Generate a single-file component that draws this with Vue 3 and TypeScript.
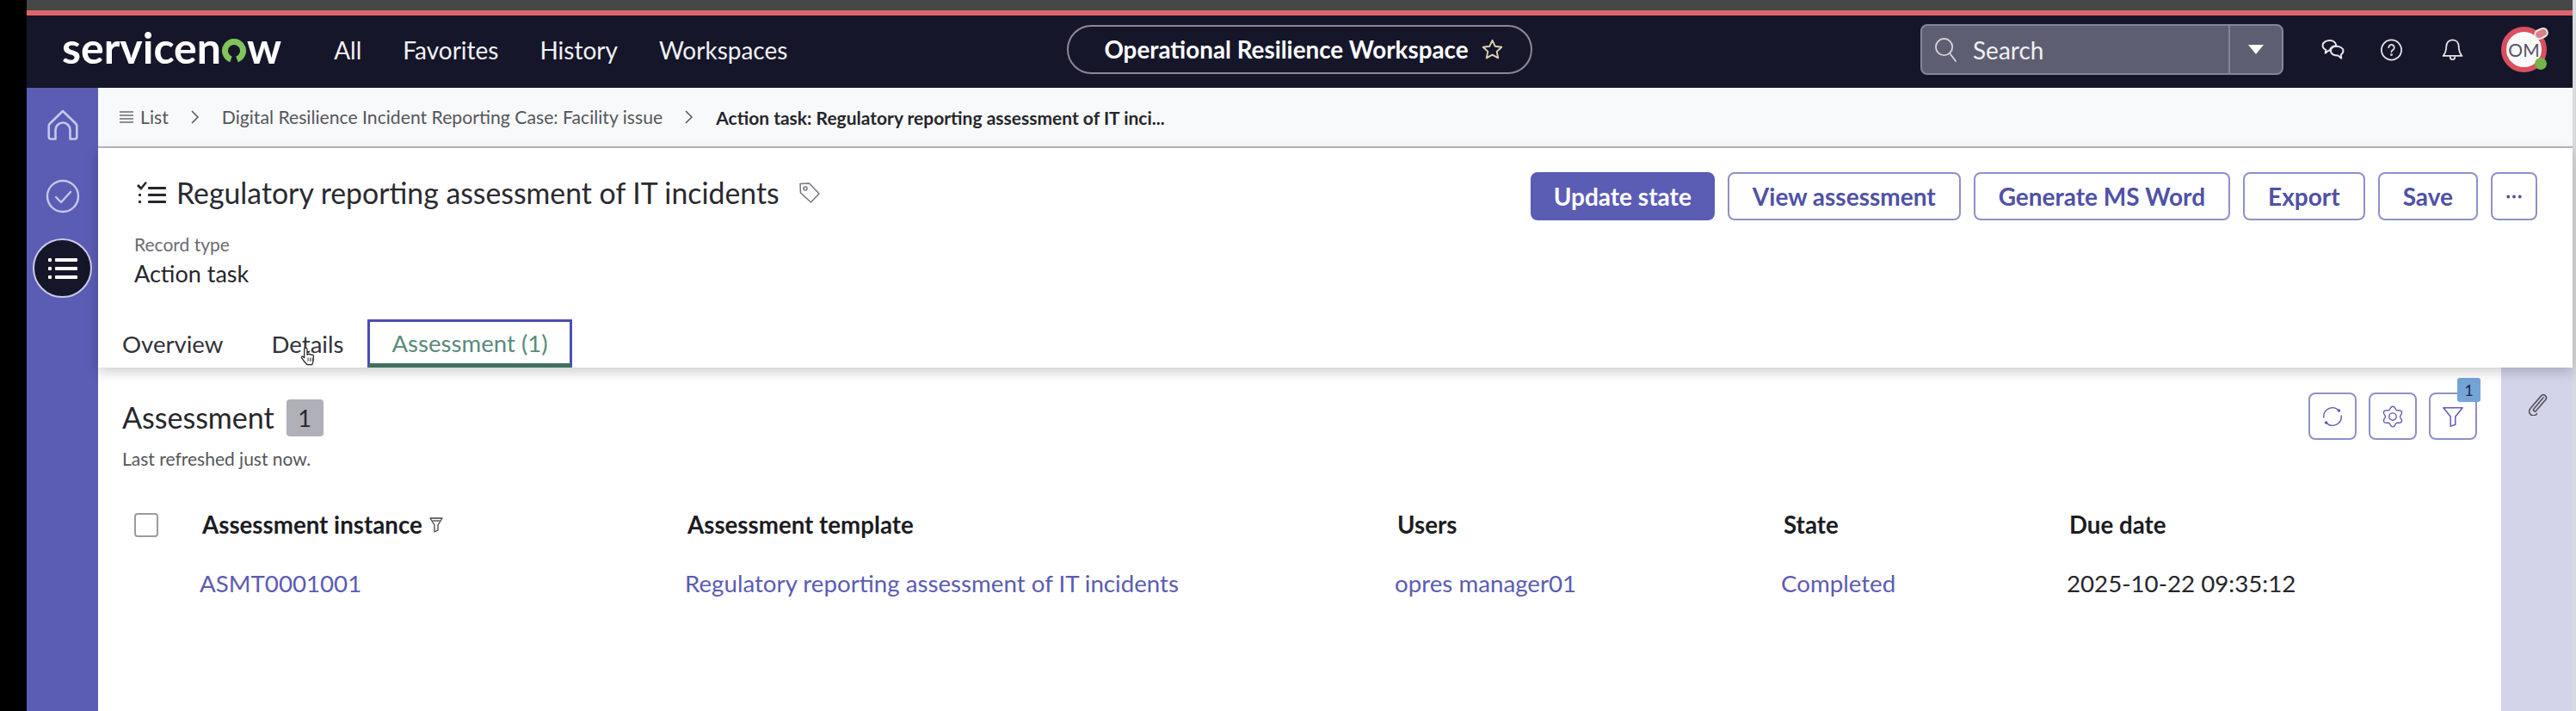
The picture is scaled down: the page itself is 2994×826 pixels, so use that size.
<template>
  <div class="screen">
    <div class="edge-left"></div>

    <div class="window">
      <div class="chrome"></div>
      <div class="accent-line"></div>

      <header class="topnav">
        <div class="nav-left">
          <div class="logo">
            <span>servicen</span>
            <svg class="logo-o" viewBox="0 0 30 30" fill="none" stroke="#81c45c" stroke-width="7">
              <path d="M11.500 24.900A10.500 10.500 0 1 1 18.500 24.900" />
            </svg>
            <span>w</span>
          </div>
          <a v-for="item in navItems" :key="item" class="nav-link">{{ item }}</a>
        </div>

        <div class="workspace-pill">
          <span>Operational Resilience Workspace</span>
          <svg class="star" viewBox="0 0 24 24" fill="none" stroke="#ddd3ac" stroke-width="1.7" stroke-linejoin="round">
            <path d="M12 2.500l2.900 6.200 6.700.8-5 4.600 1.400 6.700-6-3.400-6 3.400 1.400-6.700-5-4.600 6.700-.8z" />
          </svg>
        </div>

        <div class="nav-right">
          <div class="search">
            <div class="search-field">
              <svg class="search-icon" viewBox="0 0 28 30" fill="none" stroke="#d8d8de" stroke-width="1.8" stroke-linecap="round">
                <circle cx="12" cy="12" r="10" />
                <path d="M19 20l7 9" />
              </svg>
              <span>Search</span>
            </div>
            <div class="search-caret"><span class="caret"></span></div>
          </div>

          <svg class="nav-icon chat" viewBox="0 0 26 24" fill="none" stroke="#e6e6ea" stroke-width="1.9" stroke-linejoin="round">
            <path d="M9.500 1.500c4 0 7 2.300 7 5.300 0 .4 0 .7-.1 1-3.400-.4-6.700 1.700-6.800 5H8l-3.500 2.700.6-3.600C2.800 11 1.500 9 1.500 6.800c0-3 3.500-5.300 8-5.300z" />
            <path d="M17 8c4 0 7.500 2 7.500 5 0 1.900-1 3.400-2.600 4.300l.5 4-3.800-3c-4 .2-8-1.500-8-5C10.600 9.800 13.500 8 17 8z" />
          </svg>
          <svg class="nav-icon help" viewBox="0 0 28 28" fill="none" stroke="#e6e6ea" stroke-width="1.9" stroke-linecap="round">
            <circle cx="14" cy="14" r="12.500" />
            <path d="M10.500 11a3.500 3.500 0 1 1 5.300 3c-1.200.7-1.800 1.300-1.800 2.500" />
            <circle cx="14" cy="20" r=".6" />
          </svg>
          <svg class="nav-icon bell" viewBox="0 0 28 28" fill="none" stroke="#e6e6ea" stroke-width="1.9" stroke-linejoin="round">
            <path d="M14 1.500c4.800 0 7.800 3.500 7.800 8.500 0 5 1 8 4 11.500H2.200c3-3.500 4-6.500 4-11.500 0-5 3-8.500 7.800-8.500z" />
            <path d="M11 22c0 2.500 1.400 4 3 4s3-1.500 3-4" />
          </svg>

          <div class="avatar">
            <span class="avatar-initials">OM</span>
            <span class="avatar-tag"></span>
            <span class="avatar-status"></span>
          </div>
        </div>
      </header>

      <div class="body">
        <aside class="sidebar">
          <div class="side-item">
            <svg class="home" viewBox="0 0 36 36" fill="none" stroke="#c6c8ea" stroke-width="2.600" stroke-linejoin="round" stroke-linecap="round">
              <path d="M18 2L3 16.500c-.8.800-1.300 1.800-1.300 3V32c0 1.500 1 2.500 2.500 2.500h5.300V24a8.500 8.500 0 0 1 17 0v10.500h5.300c1.500 0 2.500-1 2.500-2.500V19.500c0-1.200-.5-2.200-1.300-3z" />
            </svg>
          </div>
          <div class="side-item">
            <svg class="check" viewBox="0 0 40 40" fill="none" stroke="#c6c8ea" stroke-width="2.400" stroke-linecap="round" stroke-linejoin="round">
              <circle cx="20" cy="20" r="18" />
              <path d="M12 21l6 6 11-12" />
            </svg>
          </div>
          <div class="side-item">
            <div class="side-active">
              <svg class="side-list" viewBox="0 0 34 28" fill="#fff">
                <rect x="0" y="2" width="4" height="4" rx="1" />
                <rect x="0" y="12" width="4" height="4" rx="1" />
                <rect x="0" y="22" width="4" height="4" rx="1" />
                <rect x="8" y="2" width="26" height="4" rx="1" />
                <rect x="8" y="12" width="26" height="4" rx="1" />
                <rect x="8" y="22" width="26" height="4" rx="1" />
              </svg>
            </div>
          </div>
        </aside>

        <main class="content">
          <nav class="breadcrumb">
            <svg class="crumb-icon" viewBox="0 0 16 14" fill="#8d8d92">
              <rect x="0" y="0" width="16" height="2" />
              <rect x="0" y="4" width="16" height="2" />
              <rect x="0" y="8" width="16" height="2" />
              <rect x="0" y="12" width="16" height="2" />
            </svg>
            <span class="crumb">List</span>
            <svg class="crumb-sep" viewBox="0 0 10 16" fill="none" stroke="#55555c" stroke-width="1.500"><path d="M1 1l7 7-7 7" /></svg>
            <span class="crumb">Digital Resilience Incident Reporting Case: Facility issue</span>
            <svg class="crumb-sep" viewBox="0 0 10 16" fill="none" stroke="#55555c" stroke-width="1.500"><path d="M1 1l7 7-7 7" /></svg>
            <span class="crumb crumb-current">Action task: Regulatory reporting assessment of IT inci...</span>
          </nav>

          <section class="record-header">
            <div class="title-row">
              <div class="title-left">
                <svg class="title-icon" viewBox="0 0 34 26" fill="#26262c">
                  <path d="M0 5l2-2 3 3 5-6 1.800 1.500L5 10z" />
                  <rect x="13" y="6" width="21" height="3" rx=".8" />
                  <rect x="13" y="14" width="21" height="3" rx=".8" />
                  <rect x="13" y="22" width="21" height="3" rx=".8" />
                  <rect x="2" y="14" width="3" height="3" rx=".8" />
                  <rect x="2" y="22" width="3" height="3" rx=".8" />
                </svg>
                <h1 class="title">Regulatory reporting assessment of IT incidents</h1>
                <svg class="tag-icon" viewBox="0 0 26 26" fill="none" stroke="#77777e" stroke-width="1.500" stroke-linejoin="round">
                  <path d="M2 2.500l10.500-.5 11.500 12-9.500 10L2.500 13z" />
                  <circle cx="8" cy="8" r="2" />
                </svg>
              </div>
              <div class="actions">
                <button class="btn btn-primary">Update state</button>
                <button v-for="label in actionLabels" :key="label" class="btn">{{ label }}</button>
                <button class="btn btn-more">
                  <svg viewBox="0 0 16 4" fill="#4f51a6"><circle cx="2" cy="2" r="1.700" /><circle cx="8" cy="2" r="1.700" /><circle cx="14" cy="2" r="1.700" /></svg>
                </button>
              </div>
            </div>

            <div class="record-type">
              <div class="record-label">Record type</div>
              <div class="record-value">Action task</div>
            </div>

            <div class="tabs">
              <div class="tab">Overview</div>
              <div class="tab tab-hover">
                Details
                <svg class="hand" viewBox="0 0 20 22">
                  <path d="M6 1.500c1 0 1.600.7 1.600 1.700v6l1-.3c.3-.8 1.700-.8 2 .2.500-.7 1.900-.5 2.100.5.600-.5 1.900-.2 2 1 .2 3 .2 6-1.500 9.500H7.500C5.500 18 3 15 1.500 12.500c-.5-1 .8-2 1.700-1.200l1.300 1.300V3.200c0-1 .5-1.700 1.500-1.700z" fill="#fff" stroke="#26262c" stroke-width="1.200" stroke-linejoin="round" />
                  <path d="M8.600 12.500v4M11 12.500v4M13.300 12.500v4" stroke="#26262c" stroke-width=".9" fill="none" />
                </svg>
              </div>
              <div class="tab tab-active">Assessment (1)</div>
            </div>
          </section>

          <div class="lower">
            <section class="assessment">
              <div class="assessment-head">
                <div class="assessment-title">
                  <h2>Assessment</h2>
                  <span class="count">1</span>
                </div>
                <div class="tools">
                  <button class="tool">
                    <svg viewBox="0 0 28 28" fill="none" stroke="#5b5cb4" stroke-width="1.500" stroke-linecap="round">
                      <path d="M3 15A11 11 0 0 1 22 6.500" />
                      <path d="M25 13A11 11 0 0 1 6 21.500" />
                      <circle cx="22" cy="6.500" r="1.200" fill="#5b5cb4" />
                      <circle cx="6" cy="21.500" r="1.200" fill="#5b5cb4" />
                    </svg>
                  </button>
                  <button class="tool">
                    <svg viewBox="0 0 28 28" fill="none" stroke="#5b5cb4" stroke-width="1.500" stroke-linejoin="round">
                      <path :d="gearPath" />
                      <circle cx="14" cy="14" r="4.500" />
                    </svg>
                  </button>
                  <button class="tool tool-filter">
                    <svg viewBox="0 0 28 28" fill="none" stroke="#5b5cb4" stroke-width="1.600" stroke-linejoin="round">
                      <path d="M2 3h24L17 14v10l-6 2V14z" />
                    </svg>
                    <span class="filter-count">1</span>
                  </button>
                </div>
              </div>
              <div class="refreshed">Last refreshed just now.</div>

              <div class="list">
                <div class="list-check"><span class="checkbox"></span></div>
                <div v-for="col in columns" :key="col" class="list-th">
                  {{ col }}
                  <svg v-if="col === 'Assessment instance'" class="th-filter" viewBox="0 0 16 20" fill="none" stroke="#44444a" stroke-width="1.300" stroke-linejoin="round">
                    <path d="M1 2h14L10 10v6l-4 2V10z" />
                    <path d="M3.500 5h9" />
                  </svg>
                </div>

                <div></div>
                <a class="list-link">{{ row.instance }}</a>
                <a class="list-link">{{ row.template }}</a>
                <a class="list-link">{{ row.user }}</a>
                <a class="list-link">{{ row.state }}</a>
                <div class="list-text">{{ row.due }}</div>
              </div>
            </section>

            <aside class="rail">
              <svg class="clip" viewBox="0 0 24 28" fill="none" stroke="#56565e" stroke-width="1.700" stroke-linecap="round" stroke-linejoin="round">
                <path d="M19 7L8 20c-1.500 1.800 1 4 2.600 2.300L21.500 9.500c3-3.600-2-8-5-4.600L4 19.500c-4.500 5.300 3 11.500 7.500 6.200" />
              </svg>
            </aside>
          </div>
        </main>
      </div>
    </div>

    <div class="edge-right"></div>
  </div>
</template>

<script setup lang="ts">
const navItems = ['All', 'Favorites', 'History', 'Workspaces']
const actionLabels = ['View assessment', 'Generate MS Word', 'Export', 'Save']
const columns = ['Assessment instance', 'Assessment template', 'Users', 'State', 'Due date']

const row = {
  instance: 'ASMT0001001',
  template: 'Regulatory reporting assessment of IT incidents',
  user: 'opres manager01',
  state: 'Completed',
  due: '2025-10-22 09:35:12',
}

// six rounded lobes round the settings gear
const gearPoints: string[] = []
for (let i = 0; i < 72; i++) {
  const a = (i / 72) * Math.PI * 2
  const r = 11 + 1.8 * Math.cos(6 * a)
  gearPoints.push((14 + r * Math.sin(a)).toFixed(2) + ' ' + (14 - r * Math.cos(a)).toFixed(2))
}
const gearPath = 'M' + gearPoints.join('L') + 'Z'
</script>

<style>
html,
body {
  margin: 0;
  background: #fff;
}
</style>

<style scoped>
.screen {
  display: flex;
  width: 2994px;
  height: 826px;
  overflow: hidden;
  font-family: Lato, 'Liberation Sans', sans-serif;
  color: #26262c;
}

.edge-left {
  width: 31px;
  flex: none;
  background: #000;
}

.edge-right {
  width: 4px;
  flex: none;
  background: #d9d9dc;
}

.window {
  flex: 1;
  min-width: 0;
  display: flex;
  flex-direction: column;
}

.chrome {
  height: 12px;
  background: #464847;
}

.accent-line {
  height: 6px;
  background: #e0646c;
}

.topnav {
  height: 84px;
  flex: none;
  box-sizing: border-box;
  padding-bottom: 5px;
  display: grid;
  grid-template-columns: 1fr auto 1fr;
  align-items: center;
  background: #16162a;
  color: #fff;
}

.nav-left {
  display: flex;
  align-items: center;
  padding-left: 41px;
}

.logo {
  display: flex;
  align-items: baseline;
  font-size: 50px;
  font-weight: 700;
  line-height: 60px;
  margin-right: 61px;
  margin-top: -5px;
}

.logo-o {
  width: 30px;
  height: 30px;
  align-self: flex-end;
  margin-bottom: 11px;
}

.nav-link {
  font-size: 28px;
  margin-right: 48px;
  color: #f2f2f4;
}

.workspace-pill {
  display: flex;
  align-items: center;
  gap: 14px;
  height: 57px;
  box-sizing: border-box;
  padding: 0 31px 0 41px;
  border: 2px solid #8a8a96;
  border-radius: 29px;
  font-size: 27.8px;
  font-weight: 700;
}

.star {
  width: 27px;
  height: 27px;
}

.nav-right {
  display: flex;
  align-items: center;
  justify-content: flex-end;
  padding-right: 30px;
}

.search {
  display: flex;
  width: 422px;
  height: 59px;
  box-sizing: border-box;
  margin-right: 44px;
  background: #5e5e72;
  border: 2px solid #84849a;
  border-radius: 8px;
}

.search-field {
  flex: 1;
  display: flex;
  align-items: center;
  gap: 18px;
  padding-left: 14px;
  font-size: 28px;
  color: #f0f0f2;
}

.search-icon {
  width: 27px;
  height: 29px;
}

.search-caret {
  width: 60px;
  display: flex;
  align-items: center;
  justify-content: center;
  border-left: 2px solid #84849a;
}

.caret {
  width: 0;
  height: 0;
  border-left: 9px solid transparent;
  border-right: 9px solid transparent;
  border-top: 11px solid #fff;
}

.nav-icon {
  width: 27px;
  height: 26px;
  flex: none;
}

.help {
  margin-left: 41px;
}

.bell {
  margin-left: 44px;
}

.avatar {
  position: relative;
  width: 53px;
  height: 53px;
  box-sizing: border-box;
  margin-left: 43px;
  display: flex;
  align-items: center;
  justify-content: center;
  background: #fafafa;
  border: 6px solid #d9505e;
  border-radius: 50%;
}

.avatar-initials {
  font-size: 21px;
  color: #555560;
}

.avatar-tag {
  position: absolute;
  top: -4px;
  right: -8px;
  width: 13px;
  height: 8px;
  border: 2px solid #ece8e8;
  border-radius: 6px;
  background: #d9808a;
  transform: rotate(-25deg);
}

.avatar-status {
  position: absolute;
  bottom: -3px;
  right: -6px;
  width: 14px;
  height: 14px;
  background: #75b54b;
  border-radius: 50%;
}

.body {
  flex: 1;
  min-height: 0;
  display: flex;
}

.sidebar {
  width: 83px;
  flex: none;
  background: #5b5cb4;
  padding-top: 1px;
}

.side-item {
  height: 83.5px;
  display: flex;
  align-items: center;
  justify-content: center;
}

.home {
  width: 36px;
  height: 36px;
}

.check {
  width: 40px;
  height: 40px;
}

.side-active {
  width: 69px;
  height: 69px;
  box-sizing: border-box;
  display: flex;
  align-items: center;
  justify-content: center;
  background: #16162a;
  border: 2px solid #c9cbe8;
  border-radius: 50%;
}

.side-list {
  width: 34px;
  height: 28px;
}

.content {
  flex: 1;
  min-width: 0;
  display: flex;
  flex-direction: column;
}

.breadcrumb {
  height: 70px;
  flex: none;
  box-sizing: border-box;
  display: flex;
  align-items: center;
  padding-left: 25px;
  background: #f8f9fa;
  border-bottom: 2px solid #b9b9bd;
  font-size: 21.2px;
  color: #55555c;
}

.crumb-icon {
  width: 16px;
  height: 14px;
  margin-right: 8px;
}

.crumb-sep {
  width: 10px;
  height: 16px;
  margin: 0 26px;
}

.crumb-current {
  color: #26262c;
  font-size: 21px;
  font-weight: 700;
}

.record-header {
  position: relative;
  z-index: 1;
  height: 255px;
  flex: none;
  box-sizing: border-box;
  padding-top: 28px;
  background: #fff;
  box-shadow: 0 5px 14px rgba(0, 0, 0, 0.2);
}

.title-row {
  display: flex;
  justify-content: space-between;
  padding: 0 41px 0 45px;
}

.title-left {
  display: flex;
  align-items: center;
  height: 48px;
}

.title-icon {
  width: 34px;
  height: 26px;
  margin-right: 12px;
}

.title {
  margin: 0;
  font-size: 33.8px;
  font-weight: 400;
  color: #2a2a30;
}

.tag-icon {
  width: 26px;
  height: 26px;
  margin-left: 22px;
}

.actions {
  display: flex;
  gap: 15px;
}

.btn {
  height: 56px;
  padding: 0 27px;
  box-sizing: border-box;
  background: #fff;
  border: 2px solid #8f90c8;
  border-radius: 8px;
  font-family: inherit;
  font-size: 28px;
  font-weight: 700;
  color: #4f51a6;
}

.btn-primary {
  padding: 0 25px;
  background: #5b5cb4;
  border-color: #5b5cb4;
  color: #fff;
}

.btn-more {
  width: 54px;
  padding: 0;
  display: flex;
  align-items: center;
  justify-content: center;
}

.btn-more svg {
  width: 18px;
  height: 5px;
}

.record-type {
  padding: 15px 0 0 42px;
}

.record-label {
  font-size: 21px;
  line-height: 26px;
  color: #6b6b72;
}

.record-value {
  margin-top: 4px;
  font-size: 27px;
  line-height: 34px;
}

.tabs {
  display: flex;
  margin-top: 36px;
}

.tab {
  height: 56px;
  box-sizing: border-box;
  display: flex;
  align-items: center;
  padding: 0 25px;
  border: 3px solid transparent;
  font-size: 27.6px;
  color: #33333a;
}

.tab-hover {
  position: relative;
}

.hand {
  position: absolute;
  left: 59px;
  top: 28px;
  width: 21px;
  height: 24px;
}

.tab-active {
  position: relative;
  color: #5a8b7a;
  border-color: #4a4fb0;
  border-bottom: 5px solid #3f6f5f;
}

.lower {
  flex: 1;
  min-height: 0;
  display: flex;
}

.assessment {
  flex: 1;
  min-width: 0;
  box-sizing: border-box;
  padding: 29px 28px 0 28px;
}

.assessment-head {
  display: flex;
  align-items: center;
  justify-content: space-between;
}

.assessment-title {
  display: flex;
  align-items: center;
  gap: 14px;
  margin-top: 3px;
}

.assessment-title h2 {
  margin: 0;
  font-size: 34px;
  font-weight: 400;
  line-height: 44px;
}

.count {
  width: 43px;
  height: 43px;
  display: flex;
  align-items: center;
  justify-content: center;
  background: #b0b0b8;
  border-radius: 4px;
  font-size: 27px;
}

.tools {
  display: flex;
  gap: 14px;
}

.tool {
  position: relative;
  width: 56px;
  height: 55px;
  padding: 0;
  display: flex;
  align-items: center;
  justify-content: center;
  background: #fff;
  border: 2px solid #8f90c8;
  border-radius: 8px;
}

.tool svg {
  width: 26px;
  height: 26px;
}

.filter-count {
  position: absolute;
  top: -19px;
  right: -6px;
  width: 27px;
  height: 28px;
  display: flex;
  align-items: center;
  justify-content: center;
  background: #74a5d6;
  border-radius: 3px;
  font-family: Lato, sans-serif;
  font-size: 18px;
  color: #1c2a4a;
}

.refreshed {
  margin-top: 9px;
  font-size: 21px;
  line-height: 26px;
  color: #55555c;
}

.list {
  display: grid;
  grid-template-columns: 76px 564px 825px 449px 332px 1fr;
  row-gap: 28px;
  align-items: center;
  margin: 44px 0 0 14px;
  font-size: 27.7px;
  line-height: 40px;
}

.checkbox {
  display: block;
  width: 28px;
  height: 28px;
  box-sizing: border-box;
  background: #fff;
  border: 2px solid #9a9aa0;
  border-radius: 4px;
}

.list-th {
  display: flex;
  align-items: center;
  gap: 8px;
  padding-left: 3px;
  font-weight: 700;
  color: #1c1c22;
}

.th-filter {
  width: 16px;
  height: 20px;
}

.list-link {
  color: #5b5cb4;
}

.list-text {
  color: #26262c;
}

.rail {
  width: 83px;
  flex: none;
  background: #d3d4ea;
  padding-top: 28px;
  display: flex;
  justify-content: center;
  align-items: flex-start;
}

.clip {
  width: 24px;
  height: 28px;
}
</style>
